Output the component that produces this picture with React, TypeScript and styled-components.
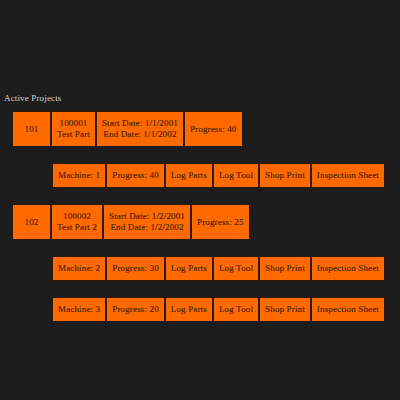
import React from "react";
import styled, { createGlobalStyle } from "styled-components";

const Global = createGlobalStyle`
  html, body { margin: 0; padding: 0; background: #1c1c1c; }
  body { font-family: "Liberation Serif", "DejaVu Serif", serif; }
`;

const Page = styled.div`
  min-height: 400px;
  box-sizing: border-box;
  padding: 93px 0 0 4px;
  background: #1c1c1c;
`;

const Title = styled.div`
  font-size: 9px;
  line-height: 11px;
  letter-spacing: 0.15px;
  color: #d8d8d8;
  margin-bottom: 7px;
`;

const List = styled.div`
  display: flex;
  flex-direction: column;
  gap: 16px;
`;

const Row = styled.div<{ $indent: number }>`
  display: flex;
  align-items: stretch;
  margin-left: ${(p) => p.$indent}px;
`;

const Cell = styled.div<{ $width?: number }>`
  display: flex;
  flex-direction: column;
  align-items: center;
  justify-content: center;
  box-sizing: border-box;
  ${(p) => (p.$width ? `width: ${p.$width}px;` : "")}
  padding: 6px 5px;
  background: #ff6a00;
  border: 1px solid #2e1a0c;
  color: #4a230a;
  font-size: 9px;
  line-height: 11px;
  letter-spacing: 0.15px;
  -webkit-text-stroke: 0.15px #4a230a;
  text-align: center;
  white-space: nowrap;
`;

type Machine = { id: number; progress: number };
type Project = {
  id: number;
  part: string;
  name: string;
  start: string;
  end: string;
  progress: number;
  machines: Machine[];
};

const projects: Project[] = [
  {
    id: 101,
    part: "100001",
    name: "Test Part",
    start: "1/1/2001",
    end: "1/1/2002",
    progress: 40,
    machines: [{ id: 1, progress: 40 }],
  },
  {
    id: 102,
    part: "100002",
    name: "Test Part 2",
    start: "1/2/2001",
    end: "1/2/2002",
    progress: 25,
    machines: [
      { id: 2, progress: 30 },
      { id: 3, progress: 20 },
    ],
  },
];

const actions = ["Log Parts", "Log Tool", "Shop Print", "Inspection Sheet"];

export default function App() {
  return (
    <>
      <Global />
      <Page>
        <Title>Active Projects</Title>
        <List>
          {projects.map((p) => (
            <React.Fragment key={p.id}>
              <Row $indent={8}>
                <Cell $width={39}>{p.id}</Cell>
                <Cell>
                  <span>{p.part}</span>
                  <span>{p.name}</span>
                </Cell>
                <Cell>
                  <span>Start Date: {p.start}</span>
                  <span>End Date: {p.end}</span>
                </Cell>
                <Cell>Progress: {p.progress}</Cell>
              </Row>
              {p.machines.map((m) => (
                <Row $indent={48} key={m.id}>
                  <Cell>Machine: {m.id}</Cell>
                  <Cell>Progress: {m.progress}</Cell>
                  {actions.map((a) => (
                    <Cell key={a}>{a}</Cell>
                  ))}
                </Row>
              ))}
            </React.Fragment>
          ))}
        </List>
      </Page>
    </>
  );
}
